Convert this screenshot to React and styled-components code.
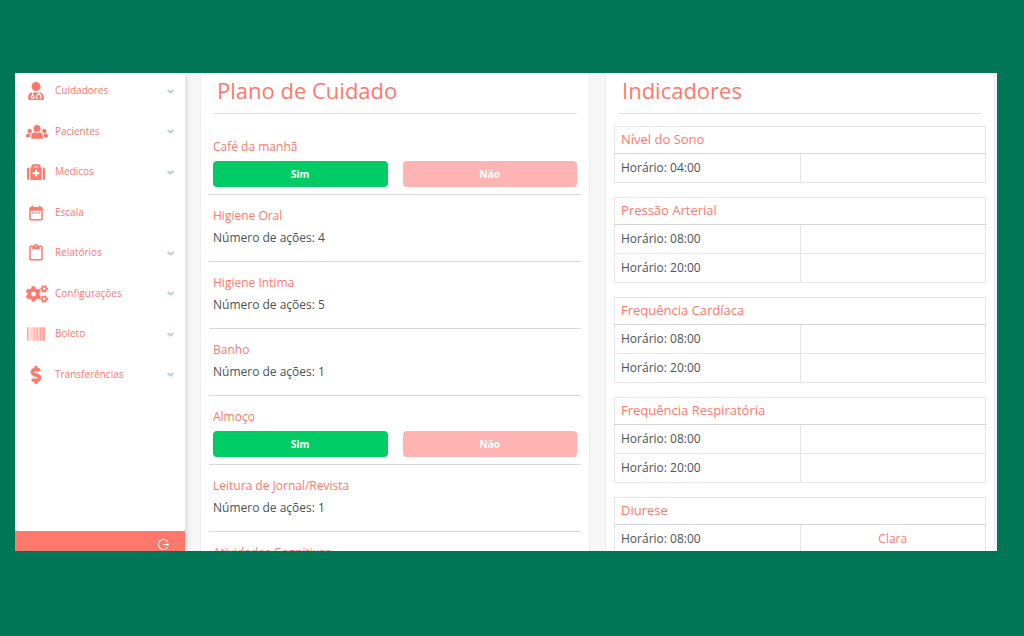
import React from 'react'
import styled, { createGlobalStyle } from 'styled-components'
import { FaBarcode, FaCogs, FaDollarSign, FaMedkit, FaUserMd } from 'react-icons/fa'
import { MdContentPaste, MdDateRange } from 'react-icons/md'
import { AiOutlineLogout } from 'react-icons/ai'


const GlobalStyle = createGlobalStyle`
    * {
      box-sizing: border-box;
    }

    body {
      margin: 0;
      background: #007656;
      color: #4c5156;
      font-family: "Open Sans", "Noto Sans", sans-serif;
      font-size: 12px;
    }
`;

const Page = styled.div`
    height: 100vh;
    display: flex;
    padding: 73px 27px 85px 15px;
`;

const Frame = styled.div`
    flex: 1;
    min-width: 0;
    display: flex;
    overflow: hidden;
    background: #f6f6f7;
`;

const Sidebar = styled.aside`
    flex: none;
    width: 170px;
    display: flex;
    flex-direction: column;
    justify-content: space-between;
    background: #fff;
    box-shadow: 0 0 8px rgba(0, 0, 0, .16);
`;

const Menu = styled.nav`
    height: 318px;
    padding-top: 2px;
    display: flex;
    flex-direction: column;
    justify-content: space-between;
`;

const MenuLink = styled.a`
    height: 32px;
    padding: 0 11px;
    display: flex;
    align-items: center;
    color: #ff786c;
    font-size: 10px;
    text-decoration: none;
`;

const MenuIcon = styled.span`
    width: ${({ $wide }) => ($wide ? 22 : 20)}px;
    margin-right: ${({ $wide }) => ($wide ? 7 : 9)}px;
    display: flex;
    justify-content: center;
    font-size: ${({ $wide }) => ($wide ? 22 : 18)}px;

    svg {
      flex: none;
    }
`;

const BoldDollar = styled(FaDollarSign)`
    stroke: currentColor;
    stroke-width: 24px;
`;

const MenuLabel = styled.span`
    flex: 1;
    padding-bottom: 2px;
`;

const SidebarFooter = styled.div`
    height: 20px;
    padding: 0 15px;
    display: flex;
    align-items: flex-end;
    justify-content: flex-end;
    background: #ff786c;
`;

const LogoutButton = styled.button`
    display: flex;
    padding: 0;
    border: none;
    background: transparent;
    color: #fff;
    font-size: 13px;
    cursor: pointer;
`;

const Content = styled.main`
    flex: 1;
    min-width: 0;
    display: flex;
    gap: 15px;
    padding: 0 2px 0 15px;
`;

const Card = styled.section`
    flex: 1;
    min-width: 0;
    padding: 0 8px;
    background: #fff;
    border: solid #eeeef0;
    border-width: 0 1px;
`;

const Title = styled.h1`
    height: 41px;
    margin: 0 4px;
    padding: 0 4px;
    border-bottom: 1px solid #dfe3e8;
    color: #ff786c;
    font-size: 22px;
    font-weight: 400;
    line-height: 34px;
`;

const PlanList = styled.div`
    padding-top: 12px;
`;

const PlanItem = styled.div`
    padding: 10px 4px ${({ $compact }) => ($compact ? 7 : 12)}px;
    border-bottom: 1px solid #d8d8da;
`;

const PlanName = styled.h2`
    margin: 0;
    color: #ff786c;
    font-size: 12px;
    font-weight: 400;
    line-height: 22px;
`;

const PlanText = styled.p`
    margin: 0;
    line-height: 22px;
`;

const Answers = styled.div`
    display: flex;
    gap: 15px;
    padding-top: 3px;
`;

const AnswerButton = styled.button`
    flex: 1;
    height: 26px;
    border: none;
    border-radius: 4px;
    background: ${({ $yes }) => ($yes ? '#00cc66' : '#ffb3b3')};
    color: #fff;
    font-family: inherit;
    font-size: 10px;
    font-weight: 700;
    cursor: pointer;
`;

const Tables = styled.div`
    display: flex;
    flex-direction: column;
    gap: 14px;
    padding-top: 12px;
`;

const Table = styled.table`
    width: 100%;
    table-layout: fixed;
    border-collapse: collapse;
`;

const HeadCell = styled.th`
    height: 27px;
    padding: 0 6px 2px;
    border: 1px solid #e4e5e7;
    border-bottom-color: #d4d4d6;
    color: #ff786c;
    font-size: 13px;
    font-weight: 400;
    line-height: 20px;
    text-align: left;
`;

const Cell = styled.td`
    height: 29px;
    padding: 0 6px;
    border: 1px solid #e4e5e7;
    line-height: 20px;
`;

const ValueCell = styled(Cell)`
    color: #ff786c;
    text-align: center;
`;


const PeopleIcon = () => (
  <svg width="22" height="14" viewBox="0 0 22 14" fill="currentColor">
    <circle cx="3.7" cy="5.9" r="2.2" />
    <circle cx="18.3" cy="5.9" r="2.2" />
    <path d="M0 12.3v-1.4C0 9.4 1 8.5 2.2 8.5h2.6C4.2 9.5 4 10.6 4 12.3z" />
    <path d="M22 12.3v-1.4c0-1.5-1-2.4-2.2-2.4h-2.6c.6 1 .8 2.1.8 3.8z" />
    <circle cx="11" cy="3.6" r="3.5" />
    <path d="M5.2 13.7v-2.2c0-2.6 1.4-4 3.4-4.2 1.4 1 3.4 1 4.8 0 2 .2 3.4 1.6 3.4 4.2v2.2z" />
  </svg>
)

const Arrow = () => (
  <svg width="7" height="5" viewBox="0 0 7 5" fill="none" stroke="#b5cbd8" strokeWidth="1.8">
    <path d="M.6 1l2.9 2.6L6.4 1" />
  </svg>
)

const menu = [
  { label: 'Cuidadores', icon: FaUserMd, arrow: true },
  { label: 'Pacientes', icon: PeopleIcon, wide: true, arrow: true },
  { label: 'Medicos', icon: FaMedkit, arrow: true },
  { label: 'Escala', icon: MdDateRange },
  { label: 'Relatórios', icon: MdContentPaste, arrow: true },
  { label: 'Configurações', icon: FaCogs, wide: true, arrow: true },
  { label: 'Boleto', icon: FaBarcode, arrow: true },
  { label: 'Transferências', icon: BoldDollar, arrow: true },
]

const plan = [
  { name: 'Café da manhã', question: true },
  { name: 'Higiene Oral', count: 4 },
  { name: 'Higiene Intima', count: 5 },
  { name: 'Banho', count: 1 },
  { name: 'Almoço', question: true },
  { name: 'Leitura de Jornal/Revista', count: 1 },
  { name: 'Atividades Cognitivas' },
]

const indicators = [
  { name: 'Nível do Sono', rows: [['04:00', '']] },
  { name: 'Pressão Arterial', rows: [['08:00', ''], ['20:00', '']] },
  { name: 'Frequência Cardíaca', rows: [['08:00', ''], ['20:00', '']] },
  { name: 'Frequência Respiratória', rows: [['08:00', ''], ['20:00', '']] },
  { name: 'Diurese', rows: [['08:00', 'Clara']] },
]

const SideMenu = () => (
  <Sidebar>
    <Menu>
      {menu.map(({ label, icon: Icon, wide, arrow }) => (
        <MenuLink href="#" key={label}>
          <MenuIcon $wide={wide}><Icon /></MenuIcon>
          <MenuLabel>{label}</MenuLabel>
          {arrow && <Arrow />}
        </MenuLink>
      ))}
    </Menu>
    <SidebarFooter>
      <LogoutButton type="button" aria-label="Sair"><AiOutlineLogout /></LogoutButton>
    </SidebarFooter>
  </Sidebar>
)

const CarePlan = () => (
  <Card>
    <Title>Plano de Cuidado</Title>
    <PlanList>
      {plan.map(({ name, question, count }) => (
        <PlanItem key={name} $compact={question}>
          <PlanName>{name}</PlanName>
          {count && <PlanText>Número de ações: {count}</PlanText>}
          {question && (
            <Answers>
              <AnswerButton type="button" $yes>Sim</AnswerButton>
              <AnswerButton type="button">Não</AnswerButton>
            </Answers>
          )}
        </PlanItem>
      ))}
    </PlanList>
  </Card>
)

const Indicators = () => (
  <Card>
    <Title>Indicadores</Title>
    <Tables>
      {indicators.map(({ name, rows }) => (
        <Table key={name}>
          <thead>
            <tr><HeadCell colSpan={2}>{name}</HeadCell></tr>
          </thead>
          <tbody>
            {rows.map(([time, value]) => (
              <tr key={time}>
                <Cell>Horário: {time}</Cell>
                <ValueCell>{value}</ValueCell>
              </tr>
            ))}
          </tbody>
        </Table>
      ))}
    </Tables>
  </Card>
)

export default function App() {
  return (
    <>
      <GlobalStyle />
      <Page>
        <Frame>
          <SideMenu />
          <Content>
            <CarePlan />
            <Indicators />
          </Content>
        </Frame>
      </Page>
    </>
  )
}
